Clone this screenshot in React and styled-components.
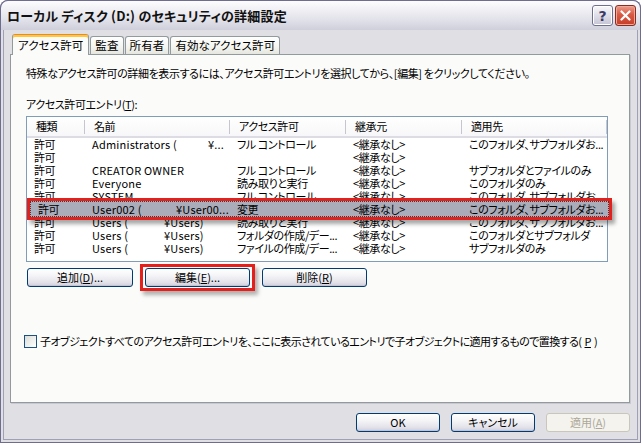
import React from 'react'
import styled, { createGlobalStyle } from 'styled-components'

const GlobalStyle = createGlobalStyle`
  html, body {
    margin: 0;
    padding: 0;
    background: #fff;
  }
  body {
    font-family: "Noto Sans CJK JP", "Noto Sans", sans-serif;
    font-size: 11px;
    letter-spacing: -0.4px;
    font-feature-settings: "palt";
    color: #000;
  }
`

const cols = (first) => `${first}px 145px 116px 116px 1fr`

const Window = styled.div`
  width: 641px;
  height: 443px;
  box-sizing: border-box;
  display: flex;
  flex-direction: column;
  background: #e0dfe3;
  border-radius: 8px 8px 0 0;
  box-shadow: inset 0 0 0 1px #6e6c8f, inset 0 0 0 3px #e0dfe3, inset 0 0 0 4px #a09fb8;
  overflow: hidden;
`

const TitleBar = styled.div`
  height: 30px;
  flex: none;
  box-sizing: border-box;
  display: flex;
  align-items: center;
  padding: 0 4px 0 6px;
  border: 1px solid #6e6c8f;
  border-bottom: none;
  border-radius: 8px 8px 0 0;
  background: linear-gradient(#fdfdff 0%, #eeeef3 35%, #dfdfe8 70%, #cfcfdb 100%);
`

const Title = styled.div`
  flex: 1;
  font-size: 13px;
  font-weight: 700;
  letter-spacing: 0.2px;
  color: #111;
`

const CaptionButton = styled.div`
  width: 21px;
  height: 21px;
  box-sizing: border-box;
  margin-left: 2px;
  display: flex;
  align-items: center;
  justify-content: center;
  border-radius: 3px;
  border: 1px solid ${p => (p.$close ? '#8a2c20' : '#6f6f8f')};
  box-shadow: inset 0 0 0 1px ${p => (p.$close ? '#eda99a' : '#ffffff')};
  background: ${p =>
    p.$close
      ? 'linear-gradient(#eb9c8b, #d95a44 45%, #c73e28 100%)'
      : 'linear-gradient(#f8f8fb, #d9d9e5 60%, #c4c4d4 100%)'};
  color: #3a3a64;
  font-family: "DejaVu Sans", sans-serif;
  font-weight: 700;
  font-size: 14px;
  letter-spacing: 0;
`

const Body = styled.div`
  flex: 1;
  display: flex;
  flex-direction: column;
  padding: 4px 11px 0 10px;
`

const TabRow = styled.div`
  display: flex;
  align-items: flex-end;
  height: 20px;
  padding-left: 2px;
  position: relative;
  z-index: 1;
`

const Tab = styled.div`
  height: ${p => (p.$active ? 21 : 18)}px;
  box-sizing: border-box;
  margin-bottom: ${p => (p.$active ? -1 : 0)}px;
  margin-right: 1px;
  padding: ${p => (p.$active ? '2px 5px 0' : '0 4px')};
  border: 1px solid #919b9c;
  border-bottom: none;
  border-top-color: ${p => (p.$active ? '#e68b2c' : '#919b9c')};
  border-radius: 3px 3px 0 0;
  background: ${p =>
    p.$active ? '#fbfbf9' : 'linear-gradient(#ffffff, #f4f4f0 60%, #e6e6e0)'};
  box-shadow: ${p => (p.$active ? 'inset 0 2px 0 #ffc83c' : 'none')};
  font-size: 11.5px;
  letter-spacing: 0.1px;
  line-height: 16px;
  white-space: nowrap;
`

const Panel = styled.div`
  height: 349px;
  box-sizing: border-box;
  border: 1px solid #919b9c;
  background: #fbfbf9;
  box-shadow: 1px 1px 0 #c9c8d2;
  padding: 11px 15px 0 15px;
  display: flex;
  flex-direction: column;
`

const Text = styled.div`
  line-height: 14px;
  margin-top: ${p => p.$mt || 0}px;
  white-space: nowrap;
`

const Key = styled.span`
  text-decoration: underline;
  text-underline-offset: 1px;
`

const List = styled.div`
  position: relative;
  width: 582px;
  height: 146px;
  box-sizing: border-box;
  margin-top: 5px;
  border: 1px solid #7f9db9;
  background: #fff;
`

const Header = styled.div`
  display: grid;
  grid-template-columns: ${cols(58)};
  height: 21px;
  box-sizing: border-box;
  border-bottom: 2px solid #dddce4;
  background: linear-gradient(#ffffff, #f7f7f9);
`

const HeaderCell = styled.div`
  position: relative;
  padding-left: 9px;
  line-height: 19px;
  white-space: nowrap;
  &::after {
    content: '';
    position: absolute;
    right: 0;
    top: 3px;
    bottom: 2px;
    width: 1px;
    background: #c7c6d0;
  }
`

const Row = styled.div`
  display: grid;
  grid-template-columns: ${p => cols(p.$first || 58)};
  height: 13px;
  line-height: 13px;
  width: 100%;
`

const Cell = styled.div`
  padding-left: 7px;
  white-space: nowrap;
  min-width: 0;
  letter-spacing: ${p => (p.$latin ? '0.2px' : 'inherit')};
`

const NamePart = styled.span`
  display: inline-block;
  width: ${p => p.$w}px;
`

const Callout = styled.div`
  position: absolute;
  left: 0;
  top: 81px;
  width: 585px;
  height: 22px;
  box-sizing: border-box;
  border: 3px solid #e3201b;
  box-shadow: 3px 4px 4px rgba(0, 0, 0, 0.35);
  background: #e3201b;
  z-index: 2;
`

const SelectedBar = styled.div`
  height: 16px;
  box-sizing: border-box;
  border: 1px dotted #3a3a3a;
  background: #aaacb9;
  display: flex;
  align-items: center;
`

const ButtonRow = styled.div`
  display: flex;
  gap: ${p => p.$gap}px;
  margin-top: ${p => p.$mt || 0}px;
  padding-left: ${p => p.$pl || 0}px;
  justify-content: ${p => (p.$end ? 'flex-end' : 'flex-start')};
  align-items: center;
`

const Button = styled.button`
  width: ${p => p.$w}px;
  height: 19px;
  box-sizing: border-box;
  padding: 0;
  font: inherit;
  letter-spacing: 0;
  line-height: 15px;
  color: #000;
  border: 1px solid #003c74;
  border-radius: 3px;
  background: linear-gradient(#ffffff, #f4f4f7 40%, #e2e1e9 80%, #cfcedb);
  box-shadow: inset 0 -1px 0 #c4c3d1;
  &:disabled {
    color: #aca899;
    border-color: #c9c7ba;
    background: #f4f3ee;
    box-shadow: none;
  }
`

const Highlight = styled.div`
  display: flex;
  margin: -4px -5px;
  padding: 1px 2px;
  border: 3px solid #e3201b;
  box-shadow: 3px 4px 4px rgba(0, 0, 0, 0.3);
`

const CheckLine = styled.label`
  display: flex;
  align-items: center;
  gap: 3px;
  margin-top: 47px;
  margin-left: -2px;
  line-height: 14px;
  white-space: nowrap;
  letter-spacing: -0.55px;
`

const Box = styled.span`
  width: 13px;
  height: 13px;
  box-sizing: border-box;
  border: 1px solid #1c5180;
  background: linear-gradient(135deg, #dcdcd7, #ffffff);
  flex: none;
`

const entries = [
  { name: 'Administrators (', tail: '¥...', w: 116, perm: 'フル コントロール', inherit: '<継承なし>', apply: 'このフォルダ、サブフォルダお...' },
  { name: '', tail: '', w: 0, perm: '', inherit: '<継承なし>', apply: '' },
  { name: 'CREATOR OWNER', tail: '', w: 0, perm: 'フル コントロール', inherit: '<継承なし>', apply: 'サブフォルダとファイルのみ' },
  { name: 'Everyone', tail: '', w: 0, perm: '読み取りと実行', inherit: '<継承なし>', apply: 'このフォルダのみ' },
  { name: 'SYSTEM', tail: '', w: 0, perm: 'フル コントロール', inherit: '<継承なし>', apply: 'このフォルダ、サブフォルダお...' },
  { name: 'User002 (', tail: '¥User00...', w: 84, perm: '変更', inherit: '<継承なし>', apply: 'このフォルダ、サブフォルダお...' },
  { name: 'Users (', tail: '¥Users)', w: 72, perm: '読み取りと実行', inherit: '<継承なし>', apply: 'このフォルダ、サブフォルダお...' },
  { name: 'Users (', tail: '¥Users)', w: 72, perm: 'フォルダの作成/デー...', inherit: '<継承なし>', apply: 'このフォルダとサブフォルダ' },
  { name: 'Users (', tail: '¥Users)', w: 72, perm: 'ファイルの作成/デー...', inherit: '<継承なし>', apply: 'サブフォルダのみ' },
]

const EntryCells = ({ e }) => (
  <>
    <Cell>許可</Cell>
    <Cell $latin>
      {e.tail ? <NamePart $w={e.w}>{e.name}</NamePart> : e.name}
      {e.tail}
    </Cell>
    <Cell>{e.perm}</Cell>
    <Cell>{e.inherit}</Cell>
    <Cell>{e.apply}</Cell>
  </>
)

export default function App() {
  return (
    <>
      <GlobalStyle />
      <Window>
        <TitleBar>
          <Title>ローカル ディスク (D:) のセキュリティの詳細設定</Title>
          <CaptionButton>?</CaptionButton>
          <CaptionButton $close>
            <svg width="11" height="11" viewBox="0 0 11 11">
              <path d="M1.5 1.5 L9.5 9.5 M9.5 1.5 L1.5 9.5" stroke="#fff" strokeWidth="2.2" strokeLinecap="round" />
            </svg>
          </CaptionButton>
        </TitleBar>

        <Body>
          <TabRow>
            <Tab $active>アクセス許可</Tab>
            <Tab>監査</Tab>
            <Tab>所有者</Tab>
            <Tab>有効なアクセス許可</Tab>
          </TabRow>

          <Panel>
            <Text>特殊なアクセス許可の詳細を表示するには、アクセス許可エントリを選択してから、[編集] をクリックしてください。</Text>
            <Text $mt={17}>
              アクセス許可エントリ(<Key>T</Key>):
            </Text>

            <List>
              <Header>
                <HeaderCell>種類</HeaderCell>
                <HeaderCell>名前</HeaderCell>
                <HeaderCell>アクセス許可</HeaderCell>
                <HeaderCell>継承元</HeaderCell>
                <HeaderCell>適用先</HeaderCell>
              </Header>
              {entries.map((e, i) => (
                <Row key={i}>
                  <EntryCells e={e} />
                </Row>
              ))}
              <Callout>
                <SelectedBar>
                  <Row $first={54}>
                    <EntryCells e={entries[5]} />
                  </Row>
                </SelectedBar>
              </Callout>
            </List>

            <ButtonRow $gap={12} $mt={6} $pl={1}>
              <Button $w={106}>
                追加(<Key>D</Key>)...
              </Button>
              <Highlight>
                <Button $w={105}>
                  編集(<Key>E</Key>)...
                </Button>
              </Highlight>
              <Button $w={105}>
                削除(<Key>R</Key>)
              </Button>
            </ButtonRow>

            <CheckLine>
              <Box />
              子オブジェクトすべてのアクセス許可エントリを、ここに表示されているエントリで子オブジェクトに適用するもので置換する(<Key>P</Key>)
            </CheckLine>
          </Panel>

          <ButtonRow $gap={11} $mt={10} $end>
            <Button $w={84}>OK</Button>
            <Button $w={84}>キャンセル</Button>
            <Button $w={84} disabled>
              適用(<Key>A</Key>)
            </Button>
          </ButtonRow>
        </Body>
      </Window>
    </>
  )
}
